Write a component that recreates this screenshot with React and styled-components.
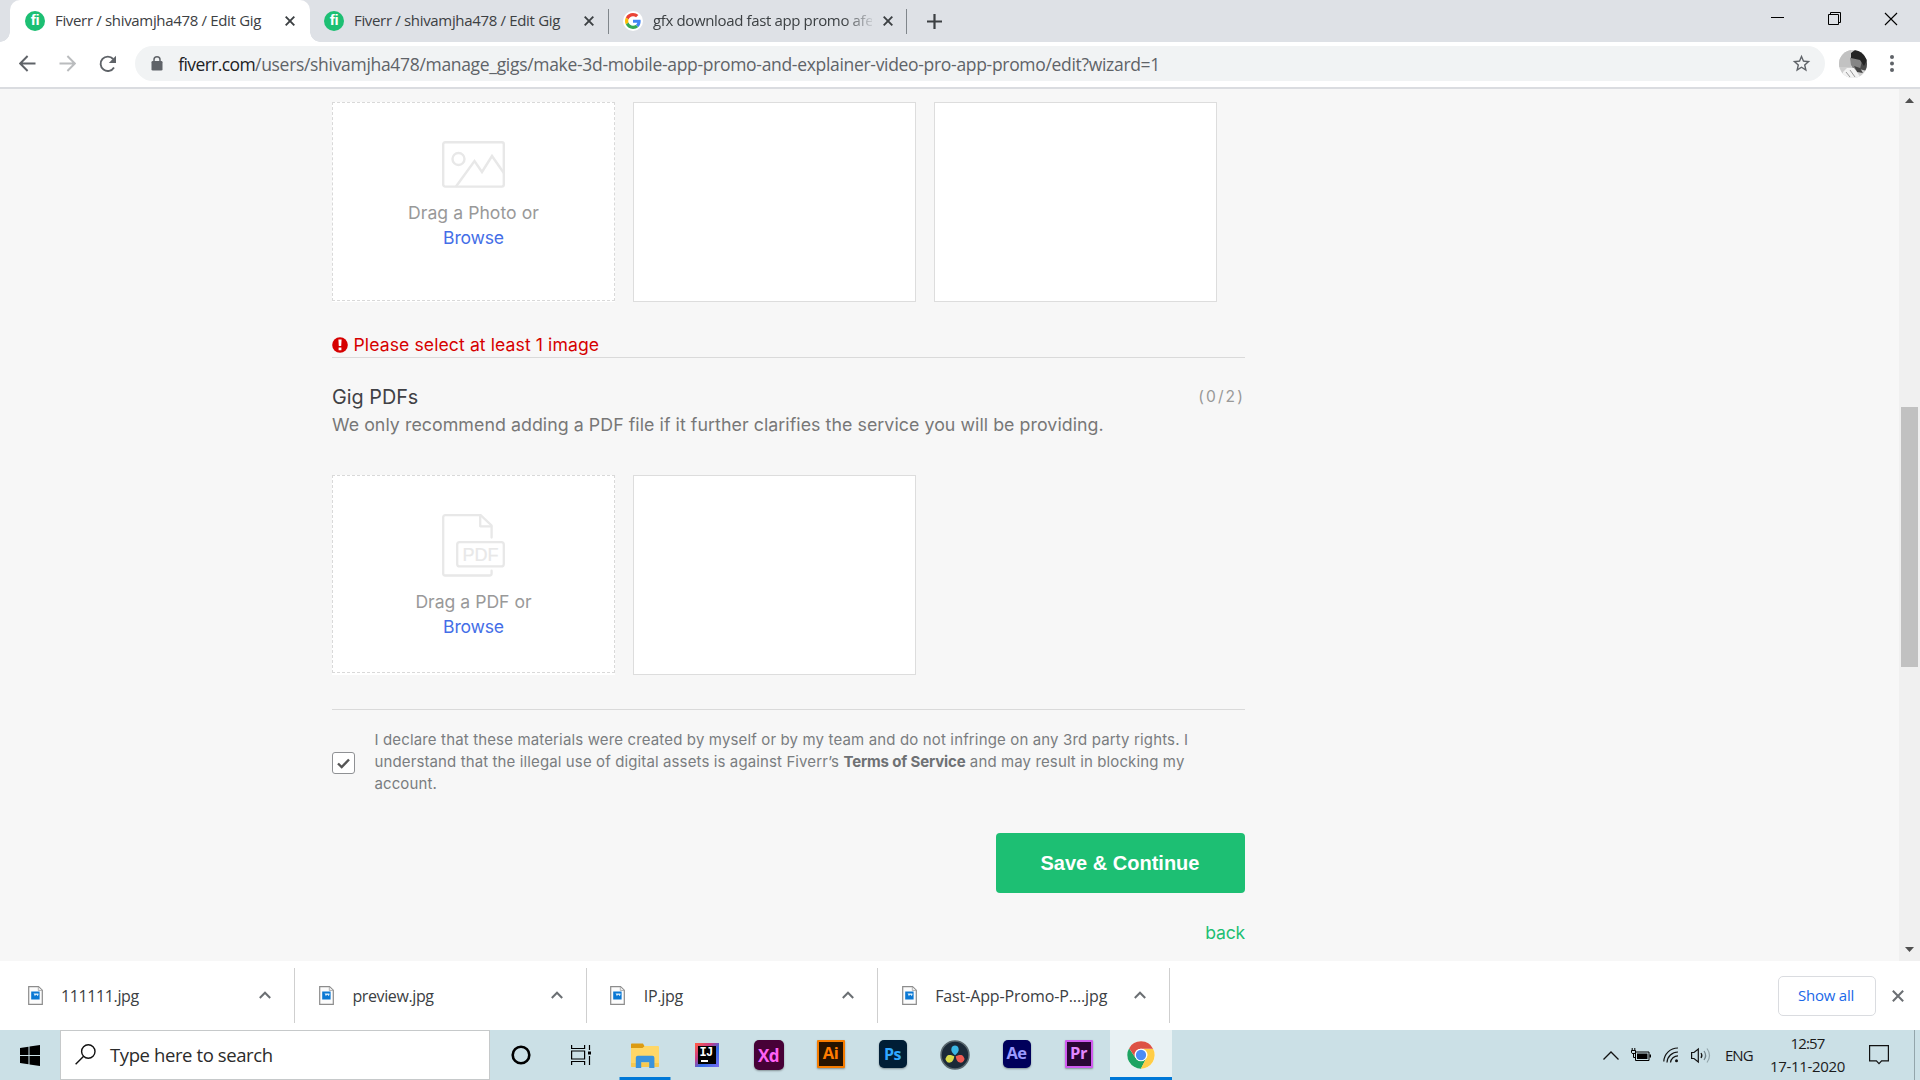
import React from 'react';
import styled, { createGlobalStyle, css } from 'styled-components';

const Global = createGlobalStyle`
  *, *::before, *::after { box-sizing: border-box; }
  body { margin: 0; width: 1920px; height: 1080px; overflow: hidden; background: #fff; }
  svg { display: block; flex: none; }
`;
const ui = css`font-family: "Open Sans", "Noto Sans", sans-serif;`;
const body = css`font-family: Inter, "Liberation Sans", sans-serif;`;

const Screen = styled.div`
  width: 1920px; height: 1080px; display: flex; flex-direction: column; overflow: hidden;
`;

/* ---------- browser chrome ---------- */
const TabStrip = styled.header`
  ${ui}
  height: 42px; background: #dee1e6; display: flex; padding-left: 10px; flex: none;
`;
const Tab = styled.div`
  width: ${p => p.$w}px; height: 42px; display: flex; align-items: center; padding: 0 0 1px ${p => p.$pad}px;
  position: relative; font-size: 15px; letter-spacing: ${p => p.$ls || -0.33}px; color: #3c4043;
  ${p => p.$active && css`
    background: #fff; border-radius: 10px 10px 0 0;
    &::before, &::after {
      content: ""; position: absolute; bottom: 0; width: 10px; height: 10px;
    }
    &::before { left: -10px; background: radial-gradient(circle at 0 0, transparent 9.5px, #fff 10px); }
    &::after { right: -10px; background: radial-gradient(circle at 100% 0, transparent 9.5px, #fff 10px); }
  `}
`;
const TabTitle = styled.span`
  width: ${p => p.$w}px; margin-left: ${p => p.$gap}px; white-space: nowrap; overflow: hidden; line-height: 22px;
  padding-bottom: 1px;
  ${p => p.$fade && css`mask-image: linear-gradient(90deg, #000 87%, transparent 102%);`}
`;
const TabClose = styled.span`display: flex; margin-left: ${p => p.$gap}px;`;
const TabRule = styled.i`width: 1px; height: 25px; margin-top: 9px; background: #80868b; flex: none;`;
const NewTab = styled.div`width: 55px; display: flex; align-items: center; justify-content: center;`;
const WindowButtons = styled.div`margin-left: auto; display: flex;`;
const WindowButton = styled.div`
  width: 57px; height: 37px; display: flex; align-items: center; justify-content: center; padding-right: 1px;
`;
const Fi = styled.span`
  width: 20px; height: 20px; border-radius: 50%; background: #1dbf73; color: #fff; flex: none;
  font: bold 15px/18px "Liberation Sans", sans-serif; letter-spacing: -0.4px; text-align: center;
`;
const GoogleDisc = styled.span`
  width: 20px; height: 20px; border-radius: 50%; background: #fff; display: flex; align-items: center;
  justify-content: center; flex: none;
`;
const Toolbar = styled.div`
  ${ui}
  height: 47px; padding: 0 0 2px 7px; display: flex; align-items: center; background: #fff;
  border-bottom: 2px solid #dadce0; flex: none;
`;
const NavButton = styled.div`width: 40.4px; display: flex; justify-content: center;`;
const Omnibox = styled.div`
  width: 1690px; height: 35px; margin-left: 7px; border-radius: 18px; background: #f1f3f4;
  display: flex; align-items: center; padding: 0 13px 0 16px; color: #5f6368; font-size: 17.5px;
`;
const Url = styled.span`margin-left: 15px; padding-top: 1px; letter-spacing: -0.313px; white-space: nowrap; line-height: 24px;`;
const Host = styled.span`color: #202124; letter-spacing: -0.6px;`;
const StarSlot = styled.span`margin-left: auto;`;
const Avatar = styled.div`
  width: 28px; height: 28px; margin-left: 14px; border-radius: 50%; overflow: hidden;
`;
const MenuDots = styled.div`margin-left: 15px; width: 20px; display: flex; justify-content: center;`;

/* ---------- page ---------- */
const Viewport = styled.main`height: 872px; display: flex; background: #f7f7f7; flex: none;`;
const Page = styled.div`${body} flex: 1; padding: 13px 0 0 332px;`;
const Column = styled.div`width: 913px;`;
const Slots = styled.div`display: flex; gap: 18px; height: 200px; margin-top: ${p => p.$top || 0}px;`;
const Slot = styled.div`width: 283px; height: 200px; background: #fff; border: 1px solid #ddd;`;
const DropSlot = styled.div`width: 283px; height: 200px; background: #fff;`;
const DropFrame = styled.div`
  height: ${p => p.$h}px; border: 1px dashed #d9d9d9; padding-top: 38px; display: flex; flex-direction: column;
  align-items: center; font-size: 17.6px; line-height: 25px; color: #999;
`;
const DropText = styled.span`margin-top: 12px; letter-spacing: ${p => p.$ls}px;`;
const Browse = styled.a`color: #446ee7; letter-spacing: -0.2px;`;
const PdfTag = styled.text`font: 18px "Liberation Sans", sans-serif; fill: #e8e8e8; stroke: #e8e8e8; stroke-width: .2px;`;
const ErrorLine = styled.div`
  margin-top: 31px; height: 25px; border-bottom: 1px solid #dadada; display: flex; align-items: center;
  color: #d60000; font-size: 17.6px; line-height: 24px; letter-spacing: 0.09px; gap: 5.5px;
`;
const SectionHead = styled.div`
  margin-top: 25px; display: flex; justify-content: space-between; height: 28px; line-height: 28px;
`;
const SectionTitle = styled.h2`margin: 0; font-size: 19.8px; font-weight: 400; color: #404145;`;
const Counter = styled.span`font-size: 15.6px; line-height: 27px; letter-spacing: 2.1px; color: #999;`;
const Hint = styled.p`
  margin: 0; font-size: 17.8px; line-height: 28px; letter-spacing: 0.05px; color: #777; white-space: nowrap;
`;
const Rule = styled.div`height: 1px; margin-top: 34px; background: #dadada;`;
const Declaration = styled.div`margin-top: 19px; display: flex; align-items: center; height: 66px;`;
const Checkbox = styled.span`
  width: 23px; height: 22px; margin-top: 2px; border: 1px solid #8f9194; border-radius: 3px; background: #fff;
  display: flex; align-items: center; justify-content: center;
`;
const DeclarationText = styled.p`
  margin: 0 0 0 19.5px; font-size: 15px; line-height: 22px; color: #7a7d80; white-space: nowrap;
`;
const Line = styled.span`display: block; letter-spacing: ${p => p.$ls}px;`;
const Terms = styled.b`letter-spacing: -0.14px; color: #6e7174;`;
const Actions = styled.div`display: flex; flex-direction: column; align-items: flex-end; margin-top: 38px;`;
const SaveButton = styled.button`
  width: 249px; height: 60px; border: 0; border-radius: 4px; background: #1dbf73; color: #fff; padding: 0 1px 0 0;
  font: 700 20px "Liberation Sans", Arial, sans-serif;
`;
const Back = styled.a`
  margin-top: 28px; font-size: 17.6px; line-height: 24px; letter-spacing: -0.2px; color: #1dbf73;
`;
const Scrollbar = styled.div`
  width: 21px; background: #f0f0f0; display: flex; flex-direction: column; align-items: center; padding: 9px 0;
`;
const Thumb = styled.div`width: 17px; height: 260px; margin: 304px 0 auto; background: #c1c1c1;`;

/* ---------- downloads shelf ---------- */
const Shelf = styled.div`
  ${ui}
  height: 69px; background: #fff; display: flex; align-items: center; padding-left: 4px; flex: none;
`;
const Download = styled.div`
  width: 291.4px; height: 55px; margin-top: -1px; border-right: 1px solid #cfcfcf; padding: 0 23px 0 23.5px;
  display: flex; align-items: center; font-size: 16px; letter-spacing: ${p => p.$ls}px; color: #3c4043;
`;
const FileName = styled.span`margin: 0 auto 0 18.5px; padding-top: 2px;`;
const ShowAll = styled.button`
  ${ui}
  margin-left: auto; width: 98px; height: 40px; border: 1px solid #dadce0; border-radius: 5px; background: #fff;
  color: #1a68e8; font-size: 15px; font-weight: 500; letter-spacing: -0.24px; padding: 0 2px 2px 0;
`;
const ShelfClose = styled.span`margin: 0 16px;`;

/* ---------- taskbar ---------- */
const Taskbar = styled.footer`
  ${ui}
  height: 50px; background: #cbe0e6; display: flex; color: #1b1b1b; flex: none;
`;
const Start = styled.div`width: 60px; display: flex; align-items: center; justify-content: center;`;
const SearchBox = styled.div`
  width: 430px; height: 50px; background: #fff; border: 1px solid #c6c9ca; display: flex; align-items: center;
  padding: 0 0 1px 14px; gap: 14px; font-size: 18.5px; letter-spacing: -0.4px; color: #2b2b2b;
`;
const TaskCell = styled.div`
  width: 62px; height: 50px; display: flex; align-items: center; justify-content: center; position: relative;
  padding-right: 1px; background: ${p => (p.$active ? '#e8f1f3' : 'transparent')};
  ${p => p.$bar && css`
    &::after {
      content: ""; position: absolute; bottom: 0; left: 50%; width: ${p.$bar}px; height: 3px;
      transform: translateX(-50%); background: #0078d7;
    }
  `}
`;
const AppBadge = styled.span`
  width: ${p => p.$s}px; height: ${p => p.$s}px; border-radius: ${p => p.$r}px; background: ${p => p.$bg};
  color: ${p => p.$fg}; border: ${p => (p.$edge ? `2px solid ${p.$edge}` : '0')}; display: flex;
  align-items: center; justify-content: center; margin-bottom: ${p => p.$lift || 0}px;
  font: 700 ${p => p.$f}px/1 "Open Sans", sans-serif; letter-spacing: -0.5px;
  box-shadow: 0 1px 2px rgba(0, 0, 0, .35);
`;
const Idea = styled.span`
  width: 24px; height: 24px; padding: 3px; margin-top: -1px;
  background: linear-gradient(135deg, #fd5a4b 5%, #c93b86 35%, #2f6ee8 60%, #7a6cf0);
`;
const IdeaCore = styled.span`
  display: block; width: 18px; height: 18px; background: #000; color: #fff; padding: 2px 0 0 2px;
  font: 700 12px/10px "Liberation Mono", monospace; letter-spacing: -0.8px;
  &::after { content: ""; display: block; width: 7px; height: 2px; margin: 2px 0 0 1px; background: #fff; }
`;
const Tray = styled.div`margin-left: auto; display: flex; align-items: center;`;
const TrayItem = styled.span`margin-right: ${p => p.$gap}px;`;
const Lang = styled.span`width: 28px; margin-right: 17px; font-size: 15px; letter-spacing: -1px;`;
const Clock = styled.div`
  width: 75px; margin-right: 24px; font-size: 15px; line-height: 23px; letter-spacing: -0.33px; text-align: center;
  white-space: nowrap;
`;
const Time = styled.div`letter-spacing: -0.85px;`;
const DesktopEdge = styled.i`width: 6px; height: 50px; border-left: 1px solid #93a5ab;`;

const Cross = ({ size = 10, w = 1.9, color = '#3c4043' }) => (
  <svg width={size} height={size} viewBox="0 0 10 10" fill="none" stroke={color} strokeWidth={w}>
    <path d="M.7.7l8.6 8.6M9.3.7L.7 9.3" />
  </svg>
);
const GoogleG = () => (
  <svg width="16" height="16" viewBox="0 0 48 48">
    <path fill="#EA4335" d="M24 9.5c3.54 0 6.71 1.22 9.21 3.6l6.85-6.85C35.9 2.38 30.47 0 24 0 14.62 0 6.51 5.38 2.56 13.22l7.98 6.19C12.43 13.72 17.74 9.5 24 9.5z" />
    <path fill="#4285F4" d="M46.98 24.55c0-1.57-.15-3.09-.38-4.55H24v9.02h12.94c-.58 2.96-2.26 5.48-4.78 7.18l7.73 6c4.51-4.18 7.09-10.36 7.09-17.65z" />
    <path fill="#FBBC05" d="M10.53 28.59c-.48-1.45-.76-2.99-.76-4.59s.27-3.14.76-4.59l-7.98-6.19C.92 16.46 0 20.12 0 24c0 3.88.92 7.54 2.56 10.78l7.97-6.19z" />
    <path fill="#34A853" d="M24 48c6.48 0 11.93-2.13 15.89-5.81l-7.73-6c-2.15 1.45-4.92 2.3-8.16 2.3-6.26 0-11.57-4.22-13.47-9.91l-7.98 6.19C6.51 42.62 14.62 48 24 48z" />
  </svg>
);
const Arrow = ({ color, flip }) => (
  <svg width="17" height="17" viewBox="0 0 17 17" fill="none" stroke={color} strokeWidth="1.9">
    <path d={flip ? 'M.5 8.5h15M8.4 1l7.4 7.5L8.4 16' : 'M16.5 8.5h-15M8.6 1L1.2 8.5 8.6 16'} />
  </svg>
);
const Reload = () => (
  <svg width="18" height="18" viewBox="0 0 18 18">
    <path d="M15 12.5A7.2 7.2 0 1 1 14.2 4" fill="none" stroke="#5f6368" strokeWidth="1.9" />
    <path d="M17 .8v7.3H9.8z" fill="#5f6368" />
  </svg>
);
const Lock = () => (
  <svg width="12" height="15" viewBox="0 0 12 15">
    <rect x=".5" y="5" width="11" height="9.5" rx="1.3" fill="#5f6368" />
    <path d="M3 6V3.8a3 3 0 0 1 6 0V6" fill="none" stroke="#5f6368" strokeWidth="1.5" />
  </svg>
);
const Star = () => (
  <svg width="21" height="21" viewBox="0 0 24 24" fill="#5f6368">
    <path d="M22 9.24l-7.19-.62L12 2 9.19 8.63 2 9.24l5.46 4.73L5.82 21 12 17.27 18.18 21l-1.63-7.03L22 9.24zM12 15.4l-3.76 2.27 1-4.28-3.32-2.88 4.38-.38L12 6.1l1.71 4.04 4.38.38-3.32 2.88 1 4.28L12 15.4z" />
  </svg>
);
const Portrait = () => (
  <svg width="28" height="28" viewBox="0 0 28 28">
    <rect width="28" height="28" fill="#cfcfcf" />
    <path d="M0 0h12v17H0z" fill="#c2c2c2" />
    <path d="M20 6l8 3v12l-8-2z" fill="#4a4a4a" />
    <path d="M11 8l5-3 7 6-2 8-6 1-3-5z" fill="#858585" />
    <path d="M12 3l4-3 8 1 4 9-3 6-4-6-9-2z" fill="#242424" />
    <path d="M15 16l6 2 3 5-6-1z" fill="#444" />
    <path d="M4 22l4-4 7 0 7 10H4z" fill="#f3f3f3" />
    <path d="M7 22l4 5M11 20l5 7" stroke="#999" />
  </svg>
);
const PhotoIcon = () => (
  <svg width="63" height="47" viewBox="0 0 63 47" fill="none" stroke="#e8e8e8" strokeWidth="2.4">
    <rect x="1.2" y="1.2" width="60.6" height="44.4" rx="2" />
    <circle cx="16.5" cy="18" r="6" />
    <path d="M14 45.5L32.5 20l7.5 11L50 15l11.8 17" />
  </svg>
);
const PdfIcon = () => (
  <svg width="63" height="63" viewBox="0 0 63 63" fill="none" stroke="#e8e8e8" strokeWidth="2.3" strokeLinecap="round" strokeLinejoin="round">
    <path d="M49.6 23.5V11.5L38.6 1.2H3.2a2 2 0 0 0-2 2v56.3a2 2 0 0 0 2 2h44.4a2 2 0 0 0 2-2v-2.8" />
    <path d="M38.2 1.5v10.8h11" />
    <rect x="15.2" y="28.2" width="46.6" height="24.2" rx="2.5" />
    <PdfTag x="20.5" y="46.7">PDF</PdfTag>
  </svg>
);
const Alert = () => (
  <svg width="16" height="16" viewBox="0 0 16 16">
    <circle cx="8" cy="8" r="7.8" fill="#d60000" />
    <path d="M6.4 2.6h3.200l-.4 6.500H6.800zM6.600 10.400h2.800v2.800H6.600z" fill="#fff" />
  </svg>
);
const JpgFile = () => (
  <svg width="15" height="19" viewBox="0 0 15 19">
    <path d="M.7.7h9.8l3.8 3.6v14H.7z" fill="#fcfcfc" stroke="#8c8c8c" strokeWidth="1.2" />
    <path d="M10.3.9v3.6h3.800" fill="#eee" stroke="#a5a5a5" strokeWidth=".8" />
    <rect x="3.200" y="5.500" width="8.400" height="8" fill="#0a78d4" />
    <path d="M5.500 7.500h5v1.200l-.8 1.600-1-1.600-1 .4-.8 1.200-.6-1.600z" fill="#dff0fc" />
  </svg>
);
const Chevron = () => (
  <svg width="12" height="8" viewBox="0 0 12 8" fill="none" stroke="#6b6f73" strokeWidth="2"><path d="M.8 7L6 1.7 11.2 7" /></svg>
);
const Explorer = () => (
  <svg width="28" height="25" viewBox="0 0 28 25">
    <path d="M0 1.2Q0 .5.7.5H12l1.500 2.800v3H0z" fill="#dc9b12" />
    <path d="M0 5h11.500l2.300-2H27q1 0 1 1v19q0 1-1 1H1q-1 0-1-1z" fill="#ffd767" />
    <path d="M0 20h28v3q0 1-1 1H1q-1 0-1-1z" fill="#f8c94f" />
    <path d="M4.800 25V14.800q0-2 2-2h14.600q2 0 2 2V25h-5.200v-5.800h-8V25z" fill="#3a93dc" />
  </svg>
);
const Resolve = () => (
  <svg width="30" height="30" viewBox="0 0 30 30">
    <circle cx="15" cy="15" r="14" fill="#1b2a38" stroke="#5a686e" strokeWidth="1.5" />
    <path d="M15 15.3C11.500 12.500 11 10.500 11.500 8.300a3.600 3.600 0 0 1 7 0c.5 2.200 0 4.200-3.500 7z" fill="#3bb6e4" />
    <path d="M14.300 16.300c-.7 4.300-2.100 5.700-4.200 6.300a3.700 3.700 0 0 1-3.500-6.100c1.500-1.600 3.500-2 7.700-.2z" fill="#d9dc4a" />
    <path d="M15.700 16.300c.7 4.300 2.100 5.700 4.200 6.300a3.700 3.700 0 0 0 3.500-6.100c-1.500-1.600-3.500-2-7.700-.2z" fill="#ee5a52" />
  </svg>
);
const Chrome = () => (
  <svg width="28" height="28" viewBox="0 0 48 48">
    <circle cx="24" cy="24" r="23.500" fill="#fff" />
    <path d="M3.650 12.250A23.500 23.500 0 0 0 24 47.500L33.300 29.350 24 24 14.700 29.350z" fill="#1da462" />
    <path d="M44.800 13.300A23.500 23.500 0 0 1 23.600 47.500L33.300 29.350A10.700 10.700 0 0 0 24 13.300z" fill="#ffcd46" />
    <path d="M3.650 12.250A23.500 23.500 0 0 1 44.800 13.300H24a10.700 10.700 0 0 0-9.300 16z" fill="#dd5144" />
    <circle cx="24" cy="24" r="10.800" fill="#fff" />
    <circle cx="24" cy="24" r="8.800" fill="#4c8bf5" />
  </svg>
);

const downloads = [
  { name: '111111.jpg', ls: -0.38 },
  { name: 'preview.jpg', ls: -0.38 },
  { name: 'IP.jpg', ls: -0.3 },
  { name: 'Fast-App-Promo-P....jpg', ls: -0.12 },
];

export default function App() {
  return (
    <Screen>
      <Global />
      <TabStrip>
        <Tab $active $w={300} $pad={15}>
          <Fi>fi</Fi><TabTitle $w={216} $gap={10}>Fiverr / shivamjha478 / Edit Gig</TabTitle>
          <TabClose $gap={14}><Cross /></TabClose>
        </Tab>
        <Tab $w={298} $pad={14}>
          <Fi>fi</Fi><TabTitle $w={216} $gap={10}>Fiverr / shivamjha478 / Edit Gig</TabTitle>
          <TabClose $gap={14}><Cross /></TabClose>
        </Tab>
        <TabRule />
        <Tab $w={297} $pad={14} $ls={-0.36}>
          <GoogleDisc><GoogleG /></GoogleDisc>
          <TabTitle $w={219} $gap={10} $fade>gfx download fast app promo afe</TabTitle>
          <TabClose $gap={11}><Cross /></TabClose>
        </Tab>
        <TabRule />
        <NewTab>
          <svg width="15" height="15" viewBox="0 0 15 15" stroke="#3c4043" strokeWidth="2.200"><path d="M7.500 0v15M0 7.500h15" /></svg>
        </NewTab>
        <WindowButtons>
          <WindowButton><svg width="13" height="13" viewBox="0 0 13 13"><path d="M0 5.500h13" stroke="#000" /></svg></WindowButton>
          <WindowButton>
            <svg width="13" height="13" viewBox="0 0 13 13" fill="none" stroke="#000"><path d="M.5 2.500h10v10H.5zM2.500 2.500v-2h10v10h-2" /></svg>
          </WindowButton>
          <WindowButton><Cross size={14} w={0.8} color="#000" /></WindowButton>
        </WindowButtons>
      </TabStrip>

      <Toolbar>
        <NavButton><Arrow color="#5f6368" /></NavButton>
        <NavButton><Arrow color="#babcbe" flip /></NavButton>
        <NavButton><Reload /></NavButton>
        <Omnibox>
          <Lock />
          <Url><Host>fiverr.com</Host>/users/shivamjha478/manage_gigs/make-3d-mobile-app-promo-and-explainer-video-pro-app-promo/edit?wizard=1</Url>
          <StarSlot><Star /></StarSlot>
        </Omnibox>
        <Avatar><Portrait /></Avatar>
        <MenuDots>
          <svg width="4" height="17" viewBox="0 0 4 17" fill="#5f6368"><circle cx="2" cy="2" r="2" /><circle cx="2" cy="8.500" r="2" /><circle cx="2" cy="15" r="2" /></svg>
        </MenuDots>
      </Toolbar>

      <Viewport>
        <Page>
          <Column>
            <Slots>
              <DropSlot>
                <DropFrame $h={199}>
                  <PhotoIcon />
                  <DropText $ls={0.05}>Drag a Photo or</DropText>
                  <Browse>Browse</Browse>
                </DropFrame>
              </DropSlot>
              <Slot /><Slot />
            </Slots>
            <ErrorLine><Alert />Please select at least 1 image</ErrorLine>
            <SectionHead><SectionTitle>Gig PDFs</SectionTitle><Counter>(0/2)</Counter></SectionHead>
            <Hint>We only recommend adding a PDF file if it further clarifies the service you will be providing.</Hint>
            <Slots $top={36}>
              <DropSlot>
                <DropFrame $h={198}>
                  <PdfIcon />
                  <DropText $ls={0}>Drag a PDF or</DropText>
                  <Browse>Browse</Browse>
                </DropFrame>
              </DropSlot>
              <Slot />
            </Slots>
            <Rule />
            <Declaration>
              <Checkbox>
                <svg width="13" height="11" viewBox="0 0 13 11" fill="none" stroke="#555" strokeWidth="2.400"><path d="M1 5.500l3.700 3.600L12 1.500" /></svg>
              </Checkbox>
              <DeclarationText>
                <Line $ls={0.145}>I declare that these materials were created by myself or by my team and do not infringe on any 3rd party rights. I</Line>
                <Line $ls={0.117}>understand that the illegal use of digital assets is against Fiverr’s <Terms>Terms of Service</Terms> and may result in blocking my</Line>
                <Line $ls={0.1}>account.</Line>
              </DeclarationText>
            </Declaration>
            <Actions>
              <SaveButton>Save &amp; Continue</SaveButton>
              <Back>back</Back>
            </Actions>
          </Column>
        </Page>
        <Scrollbar>
          <svg width="9" height="5" viewBox="0 0 9 5"><path d="M4.500 0L9 5H0z" fill="#505050" /></svg>
          <Thumb />
          <svg width="9" height="5" viewBox="0 0 9 5"><path d="M4.500 5L9 0H0z" fill="#505050" /></svg>
        </Scrollbar>
      </Viewport>

      <Shelf>
        {downloads.map(d => (
          <Download key={d.name} $ls={d.ls}><JpgFile /><FileName>{d.name}</FileName><Chevron /></Download>
        ))}
        <ShowAll>Show all</ShowAll>
        <ShelfClose><Cross size={12} w={1.700} color="#6b6f73" /></ShelfClose>
      </Shelf>

      <Taskbar>
        <Start>
          <svg width="20" height="21" viewBox="0 0 20 21"><path d="M0 3l8.500-1.300v8.300H0zM9.500 1.500L20 0v10H9.500zM0 11h8.500v8.300L0 18zM9.500 11H20v10L9.500 19.500z" /></svg>
        </Start>
        <SearchBox>
          <svg width="21" height="21" viewBox="0 0 21 21" fill="none" stroke="#111" strokeWidth="1.400"><circle cx="13.300" cy="7.500" r="6.700" /><path d="M8.600 12.300L.6 20.300" /></svg>
          Type here to search
        </SearchBox>
        <TaskCell><svg width="20" height="20" viewBox="0 0 20 20"><circle cx="10" cy="10" r="8.300" fill="none" stroke="#000" strokeWidth="2.600" /></svg></TaskCell>
        <TaskCell>
          <svg width="24" height="20" viewBox="0 0 24 20" fill="none" stroke="#000" strokeWidth="1.200"><path d="M.6 0v3.500h13V0M.6 20v-3.500h13V20M.6 6h13v8H.6zM18.500 0v5M18.500 11v9" /><path d="M17 6.500h3v3h-3z" fill="#000" stroke="none" /></svg>
        </TaskCell>
        <TaskCell $bar={51}><Explorer /></TaskCell>
        <TaskCell><Idea><IdeaCore>IJ</IdeaCore></Idea></TaskCell>
        <TaskCell><AppBadge $s={30} $r={5} $bg="#470137" $fg="#ff61f6" $f={17}>Xd</AppBadge></TaskCell>
        <TaskCell><AppBadge $s={28} $r={1} $bg="#261300" $fg="#ff7c00" $edge="#f57c00" $f={16.5} $lift={3}>Ai</AppBadge></TaskCell>
        <TaskCell><AppBadge $s={28} $r={5} $bg="#001e36" $fg="#31a8ff" $f={16} $lift={3}>Ps</AppBadge></TaskCell>
        <TaskCell><Resolve /></TaskCell>
        <TaskCell><AppBadge $s={28} $r={5} $bg="#00005b" $fg="#9999ff" $f={16.5} $lift={3}>Ae</AppBadge></TaskCell>
        <TaskCell><AppBadge $s={28} $r={1} $bg="#2a0634" $fg="#e388ff" $edge="#d05cf0" $f={16.5} $lift={3}>Pr</AppBadge></TaskCell>
        <TaskCell $active $bar={62}><Chrome /></TaskCell>

        <Tray>
          <TrayItem $gap={12}><svg width="16" height="9" viewBox="0 0 16 9" fill="none" stroke="#111" strokeWidth="1.300"><path d="M.5 8.500L8 1l7.500 7.500" /></svg></TrayItem>
          <TrayItem $gap={12}>
            <svg width="20" height="14" viewBox="0 0 20 14"><path d="M4.500 4h13.500v8.500H4.500z" fill="none" stroke="#000" /><path d="M6 5.500h10.500V11H6zM18.500 6.500H20v3h-1.500z" /><path d="M1.200 0v3M3.800 0v3M.5 2.500h4v2.200l-2 1.500-2-1.500zM2.500 5v4.500h2" fill="none" stroke="#000" /></svg>
          </TrayItem>
          <TrayItem $gap={12}>
            <svg width="16" height="16" viewBox="0 0 16 16" fill="none" stroke="#111" strokeWidth="1.200"><path d="M.8 14.500A14 14 0 0 1 15 1M4 15.500A11 11 0 0 1 15 5M7.500 15.500A7.500 7.500 0 0 1 15 8.800" /><circle cx="13.500" cy="13.800" r="1.500" fill="#111" stroke="none" /></svg>
          </TrayItem>
          <TrayItem $gap={14}>
            <svg width="20" height="17" viewBox="0 0 20 17" fill="none" stroke="#111" strokeWidth="1.200"><path d="M.6 5.500H3L7.300 2v13L3 11.500H.6z" /><path d="M10 6q1.800 2.500 0 5" /><path d="M13 4q3.300 4.500 0 9" stroke="#72838a" /><path d="M16 1.500q5 7 0 14" stroke="#93a5ab" /></svg>
          </TrayItem>
          <Lang>ENG</Lang>
          <Clock><Time>12:57</Time><div>17-11-2020</div></Clock>
          <TrayItem $gap={25}>
            <svg width="20" height="20" viewBox="0 0 20 20" fill="none" stroke="#111" strokeWidth="1.200"><path d="M.6.6h18.800v15.200h-6.800L10 18.700l-2.600-2.900H.6z" /></svg>
          </TrayItem>
          <DesktopEdge />
        </Tray>
      </Taskbar>
    </Screen>
  );
}
